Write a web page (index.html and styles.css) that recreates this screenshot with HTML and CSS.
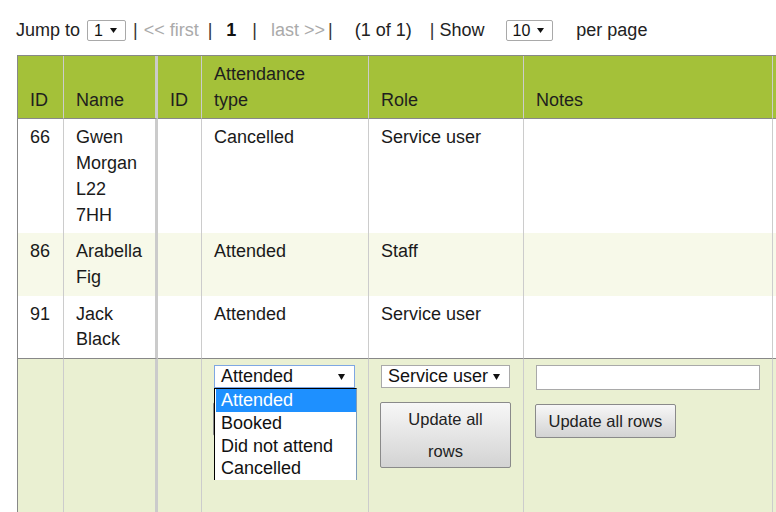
FILE: index.html
```html
<!DOCTYPE html>
<html>
<head>
<meta charset="utf-8">
<link rel="stylesheet" href="styles.css">
</head>
<body>
<div class="pager">
  <span class="lbl">Jump to</span>
  <span class="tsel ml7"><span>1</span><svg class="arr" width="7" height="5" viewBox="0 0 7 5"><path d="M0 0H7L3.5 5Z"/></svg></span>
  <span class="pipe ml7">|</span>
  <span class="dim ml6">&lt;&lt; first</span>
  <span class="pipe ml9">|</span>
  <span class="cur ml14">1</span>
  <span class="pipe ml16">|</span>
  <span class="dim ml14">last &gt;&gt;</span>
  <span class="pipe ml3">|</span>
  <span class="ml22">(1 of 1)</span>
  <span class="pipe ml18">|</span>
  <span class="ml5">Show</span>
  <span class="tsel ml21"><span>10</span><svg class="arr" width="7" height="5" viewBox="0 0 7 5"><path d="M0 0H7L3.5 5Z"/></svg></span>
  <span class="ml23">per page</span>
</div>

<table class="grid">
  <thead>
    <tr>
      <th class="c1">ID</th>
      <th class="c2">Name</th>
      <th class="c3">ID</th>
      <th class="c4">Attendance<br>type</th>
      <th class="c5">Role</th>
      <th class="c6">Notes</th>
      <th class="c7"></th>
    </tr>
  </thead>
  <tbody>
    <tr>
      <td class="c1">66</td>
      <td class="c2">Gwen Morgan L22 7HH</td>
      <td class="c3"></td>
      <td class="c4">Cancelled</td>
      <td class="c5">Service user</td>
      <td class="c6"></td>
      <td class="c7"></td>
    </tr>
    <tr class="alt">
      <td class="c1">86</td>
      <td class="c2">Arabella Fig</td>
      <td class="c3"></td>
      <td class="c4">Attended</td>
      <td class="c5">Staff</td>
      <td class="c6"></td>
      <td class="c7"></td>
    </tr>
    <tr>
      <td class="c1">91</td>
      <td class="c2">Jack Black</td>
      <td class="c3"></td>
      <td class="c4">Attended</td>
      <td class="c5">Service user</td>
      <td class="c6"></td>
      <td class="c7"></td>
    </tr>
  </tbody>
  <tfoot>
    <tr>
      <td class="c1"></td>
      <td class="c2"></td>
      <td class="c3"></td>
      <td class="c4">
        <div class="selwrap">
          <div class="fsel focus"><span>Attended</span><svg class="arr" width="7" height="6" viewBox="0 0 7 6"><path d="M0 0H7L3.5 6Z"/></svg></div>
          <ul class="dropdown">
            <li class="on">Attended</li>
            <li>Booked</li>
            <li>Did not attend</li>
            <li>Cancelled</li>
          </ul>
        </div>
        <button class="btn">Update all rows</button>
      </td>
      <td class="c5">
        <div class="fsel"><span>Service user</span><svg class="arr" width="7" height="6" viewBox="0 0 7 6"><path d="M0 0H7L3.5 6Z"/></svg></div>
        <button class="btn">Update all rows</button>
      </td>
      <td class="c6">
        <input class="note" type="text">
        <button class="btn">Update all rows</button>
      </td>
      <td class="c7"></td>
    </tr>
  </tfoot>
</table>
</body>
</html>
```

FILE: styles.css
```css
html, body {
  margin: 0;
  padding: 0;
  overflow: hidden;
  background: #fff;
}
body {
  font-family: "Liberation Sans", Arial, sans-serif;
  font-size: 18px;
  color: #222;
}

/* pager */
.pager {
  display: flex;
  align-items: center;
  height: 23px;
  margin-top: 19px;
  margin-bottom: 13px;
  padding-left: 16px;
  white-space: nowrap;
  color: #222;
}
.pipe { color: #333; }
.dim { color: #aaa; }
.cur { font-weight: bold; color: #111; }
.ml3 { margin-left: 3px; }
.ml5 { margin-left: 5px; }
.ml6 { margin-left: 6px; }
.ml7 { margin-left: 7px; }
.ml9 { margin-left: 9px; }
.ml14 { margin-left: 14px; }
.ml16 { margin-left: 16px; }
.ml18 { margin-left: 18px; }
.ml21 { margin-left: 21px; }
.ml22 { margin-left: 22px; }
.ml23 { margin-left: 23px; }

.tsel {
  display: inline-flex;
  align-items: center;
  gap: 7px;
  box-sizing: border-box;
  height: 21px;
  padding: 0 8px 0 6px;
  border: 1px solid #a9a9a9;
  border-radius: 2px;
  font-size: 16px;
  color: #111;
  background: #fff;
}
.arr { display: block; fill: #111; }

/* table */
.grid {
  margin-left: 17px;
  border-collapse: separate;
  border-spacing: 0;
  table-layout: fixed;
  width: 856px;
  border-left: 1px solid #888;
  border-top: 1px solid #888;
}
.grid th, .grid td {
  box-sizing: border-box;
  padding: 6px 12px 5px 12px;
  line-height: 25.7px;
  text-align: left;
  border-right: 1px solid #ccc;
}
.grid th {
  background: #a4c139;
  font-weight: normal;
  vertical-align: bottom;
  border-bottom: 1px solid #888;
  color: #1e1e1e;
}
.grid td {
  vertical-align: top;
  color: #1a1a1a;
}
.grid .c1 { width: 46px; }
.grid .c2 { width: 94px; border-right: 3px solid #cbcbcb; }
.grid .c3 { width: 44px; }
.grid .c4 { width: 167px; }
.grid .c5 { width: 155px; }
.grid .c6 { width: 249px; }
.grid .c7 { width: 101px; }

.grid tbody tr { background: #fff; }
.grid tbody tr.alt { background: #f7f9e9; }

.grid tfoot td {
  background: #eaf0d2;
  border-top: 1px solid #888;
  padding-top: 6px;
  height: 200px;
}

/* footer controls */
.selwrap { position: relative; }
.fsel {
  display: flex;
  align-items: center;
  justify-content: space-between;
  box-sizing: border-box;
  width: calc(100% - 1px);
  height: 23px;
  padding: 0 9px 0 6px;
  border: 1px solid #a9a9a9;
  background: #fff;
  line-height: 21px;
  color: #111;
  white-space: nowrap;
}
.fsel.focus { border-color: #7ea7e3; }

.dropdown {
  position: absolute;
  top: 100%;
  left: 0;
  width: 141px;
  margin: 0;
  padding: 0;
  list-style: none;
  background: #fff;
  border: 1px solid #000;
  border-right-color: #7f9db9;
  border-bottom: none;
  z-index: 2;
}
.dropdown li {
  padding: 0 6px;
  height: 22.75px;
  line-height: 22.75px;
  color: #111;
  white-space: nowrap;
}
.dropdown li.on {
  background: #1e90ff;
  color: #fff;
  margin-left: 1px;
  padding-left: 5px;
}

.note {
  display: block;
  box-sizing: border-box;
  width: 100%;
  height: 25px;
  margin: 0;
  padding: 0 4px;
  border: 1px solid #a9a9a9;
  background: #fff;
}

.btn {
  display: block;
  max-width: calc(100% + 1px);
  margin: 14px 0 0 -1px;
  padding: 0 12.5px;
  border: 1px solid #8a8a8a;
  border-radius: 2px;
  background: linear-gradient(#f7f7f7, #d3d3d3);
  font-family: "Liberation Sans", Arial, sans-serif;
  font-size: 16.5px;
  line-height: 32px;
  color: #222;
  text-align: center;
}
```
